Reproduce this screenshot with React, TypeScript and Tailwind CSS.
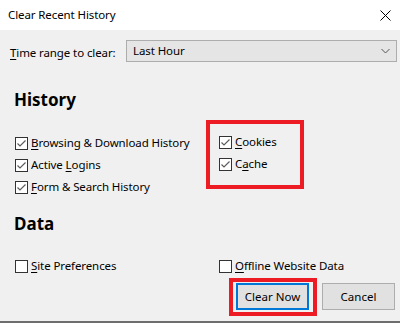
const font = { fontFamily: '"Noto Sans", "Liberation Sans", sans-serif' };

function Label({ text, k }: { text: string; k: number }) {
  return (
    <span className="text-[11.5px] leading-none text-black tracking-[-0.1px]">
      {text.slice(0, k)}
      <span className="underline underline-offset-2">{text[k]}</span>
      {text.slice(k + 1)}
    </span>
  );
}

function CheckRow({ text, k, checked }: { text: string; k: number; checked: boolean }) {
  return (
    <div className="flex items-center gap-[3px] h-[22px]">
      <span className="w-[13px] h-[13px] border border-[#333333] bg-white flex items-center justify-center shrink-0">
        {checked && (
          <svg width="11" height="11" viewBox="0 0 11 11">
            <polyline points="1.5,5.5 4,8 9.5,2.5" fill="none" stroke="#5c5c5c" strokeWidth="1.2" />
          </svg>
        )}
      </span>
      <Label text={text} k={k} />
    </div>
  );
}

export default function App() {
  return (
    <div className="w-[400px] h-[323px] overflow-hidden bg-[#f0f0f0] flex flex-col" style={font}>
      <div className="h-[30px] bg-white flex items-center justify-between pl-2 pr-[9px] shrink-0">
        <span className="text-[11.5px] tracking-[-0.1px] text-black">Clear Recent History</span>
        <svg width="11" height="11" viewBox="0 0 11 11">
          <path d="M0.5 0.5L10.5 10.5M10.5 0.5L0.5 10.5" stroke="#000" strokeWidth="1" />
        </svg>
      </div>

      <div className="flex items-center mt-[10px] h-[22px] pl-[10px] pr-[3px]">
        <div className="w-[116px]">
          <Label text="Time range to clear:" k={0} />
        </div>
        <div className="flex-1 h-[22px] border border-[#adadad] bg-[#e5e5e5] flex items-center justify-between pl-[6px] pr-[6px]">
          <span className="text-[11.5px] tracking-[-0.1px] text-black">Last Hour</span>
          <svg width="9" height="6" viewBox="0 0 9 6">
            <polyline points="0.5,1 4.5,5 8.5,1" fill="none" stroke="#555" strokeWidth="1" />
          </svg>
        </div>
      </div>

      <div className="mt-[28px] pl-[14px] h-[20px] text-[17px] leading-[20px] font-bold text-black">History</div>

      <div className="flex items-start mt-[10px]">
        <div className="w-[206px] pl-[15px] pt-[12px] flex flex-col">
          <CheckRow text="Browsing & Download History" k={0} checked />
          <CheckRow text="Active Logins" k={7} checked />
          <CheckRow text="Form & Search History" k={0} checked />
        </div>
        <div className="w-[98px] border-[4px] border-[#ed1c24] pl-[9px] pt-[7px] pb-[10px] flex flex-col">
          <CheckRow text="Cookies" k={0} checked />
          <CheckRow text="Cache" k={1} checked />
        </div>
      </div>

      <div className="mt-[16px] pl-[14px] h-[20px] text-[17px] leading-[20px] font-bold text-black">Data</div>

      <div className="flex mt-[21px]">
        <div className="w-[219px] pl-[15px]">
          <CheckRow text="Site Preferences" k={0} checked={false} />
        </div>
        <CheckRow text="Offline Website Data" k={0} checked={false} />
      </div>

      <div className="flex items-start justify-end gap-[5px] pr-[5px] mt-px">
        <div className="w-[88px] h-[38px] border-[4px] border-[#ed1c24] pl-[3px] pt-px">
          <button className="w-[73px] h-[27px] border-2 border-[#0078d7] bg-[#e1e1e1] text-[11.5px] text-black">
            Clear Now
          </button>
        </div>
        <button className="w-[73px] h-[27px] mt-[5px] border border-[#adadad] bg-[#e1e1e1] text-[11.5px] text-black">
          Cancel
        </button>
      </div>

      <div className="mt-auto h-[2px] bg-[#6d6d6d]" />
    </div>
  );
}
